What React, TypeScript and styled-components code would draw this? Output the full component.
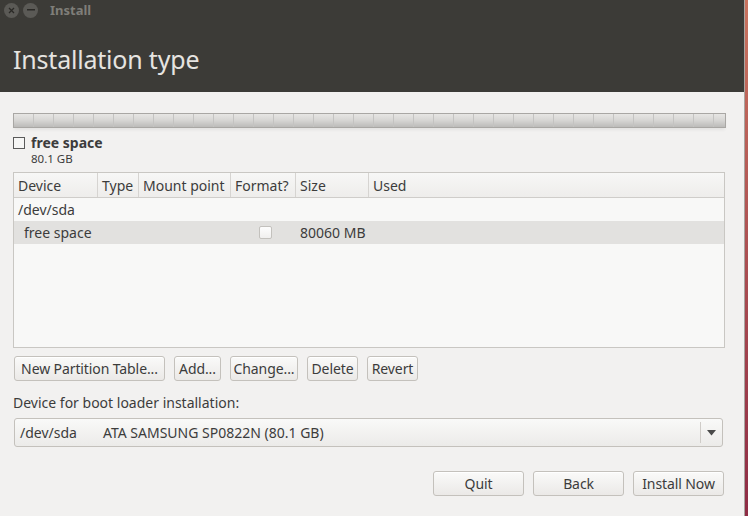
import React from "react";
import styled, { createGlobalStyle } from "styled-components";

const Global = createGlobalStyle`
  html, body { margin: 0; padding: 0; }
  body {
    width: 748px; height: 516px; overflow: hidden;
    font-family: "Noto Sans", "Open Sans", sans-serif;
    background: linear-gradient(#c9735f, #8e2c45);
  }
`;

const Frame = styled.div`
  display: flex;
  width: 748px;
  height: 516px;
`;

const Window = styled.div`
  width: 744px;
  height: 516px;
  display: flex;
  flex-direction: column;
  background: #f2f1f0;
  border-right: 1px solid #a9a6a2;
  color: #3c3c3c;
`;

const Header = styled.div`
  height: 92px;
  background: #3c3b37;
  display: flex;
  flex-direction: column;
  padding: 0 0 0 4px;
  box-sizing: border-box;
`;

const TitleBar = styled.div`
  height: 20px;
  display: flex;
  align-items: center;
  gap: 4px;
`;

const WinBtn = styled.span`
  width: 15px;
  height: 15px;
  border-radius: 50%;
  background: #5b5a56;
  display: flex;
  align-items: center;
  justify-content: center;
`;

const TitleText = styled.span`
  margin-left: 8px;
  font-weight: bold;
  font-size: 13px;
  color: #7f7e79;
`;

const PageTitle = styled.h1`
  margin: 22px 0 0 9px;
  font-weight: normal;
  font-size: 25px;
  line-height: 34px;
  color: #e6e4e0;
  letter-spacing: -0.2px;
`;

const Body = styled.div`
  flex: 1;
  padding: 21px 19px 0 13px;
  display: flex;
  flex-direction: column;
`;

const PartBar = styled.div`
  height: 13px;
  margin-right: -1px;
  border: 1px solid #a9a7a4;
  background:
    repeating-linear-gradient(90deg, transparent 0 19px, #c4c3c1 19px 20px),
    linear-gradient(#e7e6e4, #d6d5d3 50%, #bcbbb9);
  box-shadow: 0 3px 3px -1px rgba(0,0,0,0.06);
`;

const Legend = styled.div`
  margin-top: 6px;
  display: grid;
  grid-template-columns: 18px auto;
  grid-template-rows: 18px 14px;
  align-items: center;
`;

const LegendBox = styled.span`
  width: 10px;
  height: 10px;
  border: 1px solid #5a5a5a;
  background: #f6f6f5;
`;

const LegendName = styled.span`
  font-weight: bold;
  font-size: 14px;
  line-height: 18px;
  color: #3c3c3c;
`;

const LegendSize = styled.span`
  grid-column: 2;
  font-size: 11.5px;
  line-height: 14px;
  color: #3c3c3c;
`;

const Table = styled.div`
  margin-top: 6px;
  height: 174px;
  border: 1px solid #c9c7c3;
  background: #f8f8f7;
  display: flex;
  flex-direction: column;
`;

const cols = "84px 41px 92px 65px 73px 1fr";

const HeadRow = styled.div`
  display: grid;
  grid-template-columns: ${cols};
  height: 24px;
  background: linear-gradient(#f7f7f6, #eeedeb);
  border-bottom: 1px solid #cfcdca;
`;

const HeadCell = styled.div`
  font-size: 14px;
  padding-left: 4px;
  display: flex;
  align-items: center;
  border-right: 1px solid #d6d4d1;
  &:last-child { border-right: none; }
`;

const Row = styled.div<{ $sel?: boolean }>`
  display: grid;
  grid-template-columns: ${cols};
  height: 23px;
  align-items: center;
  font-size: 14px;
  background: ${(p) => (p.$sel ? "#e2e1df" : "transparent")};
`;

const Cell = styled.div<{ $indent?: number; $center?: boolean }>`
  padding-left: ${(p) => p.$indent ?? 4}px;
  white-space: nowrap;
  display: flex;
  justify-content: ${(p) => (p.$center ? "center" : "flex-start")};
`;

const SpanCell = styled(Cell)`
  grid-column: 1 / span 3;
`;

const CheckBox = styled.span`
  width: 11px;
  height: 11px;
  border: 1px solid #c3c1bd;
  border-radius: 2px;
  background: linear-gradient(#fdfdfd, #f0efee);
`;

const ButtonRow = styled.div`
  margin-top: 8px;
  display: flex;
  gap: 9px;
  padding-left: 1px;
`;

const Button = styled.button<{ $w: number }>`
  height: 25px;
  width: ${(p) => p.$w}px;
  padding: 0;
  font-family: inherit;
  font-size: 14px;
  color: #3c3c3c;
  background: linear-gradient(#fafaf9, #ebe9e7);
  border: 1px solid #c4c1bc;
  border-radius: 3px;
  box-shadow: inset 0 1px 0 #ffffff;
  display: flex;
  align-items: center;
  justify-content: center;
  white-space: nowrap;
  letter-spacing: -0.1px;
`;

const Label = styled.div`
  margin-top: 12px;
  font-size: 14px;
`;

const Combo = styled.div`
  margin-top: 6px;
  margin-left: 1px;
  margin-right: 2px;
  height: 27px;
  border: 1px solid #c4c1bc;
  border-radius: 3px;
  background: linear-gradient(#f9f9f8, #ecebe9);
  display: flex;
  align-items: center;
  font-size: 14px;
`;

const ComboDev = styled.span`
  padding-left: 5px;
  width: 83px;
`;

const ComboDesc = styled.span`
  flex: 1;
`;

const ComboArrow = styled.span`
  width: 21px;
  height: 21px;
  border-left: 1px solid #cfccc8;
  display: flex;
  align-items: center;
  justify-content: center;
`;

const Footer = styled.div`
  margin-top: 24px;
  display: flex;
  justify-content: flex-end;
  gap: 9px;
  padding-right: 1px;
`;

export default function App() {
  return (
    <Frame>
      <Global />
      <Window>
        <Header>
          <TitleBar>
            <WinBtn>
              <svg width="7" height="7" viewBox="0 0 7 7">
                <path d="M1 1L6 6M6 1L1 6" stroke="#2a2926" strokeWidth="1.3" />
              </svg>
            </WinBtn>
            <WinBtn>
              <svg width="8" height="2" viewBox="0 0 8 2">
                <rect x="0" y="0" width="8" height="1.5" fill="#2a2926" />
              </svg>
            </WinBtn>
            <TitleText>Install</TitleText>
          </TitleBar>
          <PageTitle>Installation type</PageTitle>
        </Header>
        <Body>
          <PartBar />
          <Legend>
            <LegendBox />
            <LegendName>free space</LegendName>
            <LegendSize>80.1 GB</LegendSize>
          </Legend>
          <Table>
            <HeadRow>
              <HeadCell>Device</HeadCell>
              <HeadCell>Type</HeadCell>
              <HeadCell>Mount point</HeadCell>
              <HeadCell>Format?</HeadCell>
              <HeadCell>Size</HeadCell>
              <HeadCell>Used</HeadCell>
            </HeadRow>
            <Row>
              <SpanCell>/dev/sda</SpanCell>
            </Row>
            <Row $sel>
              <SpanCell $indent={10}>free space</SpanCell>
              <Cell $center>
                <CheckBox />
              </Cell>
              <Cell>80060 MB</Cell>
              <Cell />
            </Row>
          </Table>
          <ButtonRow>
            <Button $w={151}>New Partition Table...</Button>
            <Button $w={47}>Add...</Button>
            <Button $w={68}>Change...</Button>
            <Button $w={51}>Delete</Button>
            <Button $w={51}>Revert</Button>
          </ButtonRow>
          <Label>Device for boot loader installation:</Label>
          <Combo>
            <ComboDev>/dev/sda</ComboDev>
            <ComboDesc>ATA SAMSUNG SP0822N (80.1 GB)</ComboDesc>
            <ComboArrow>
              <svg width="9" height="6" viewBox="0 0 9 6">
                <path d="M0 0H9L4.5 5.5Z" fill="#4a4a4a" />
              </svg>
            </ComboArrow>
          </Combo>
          <Footer>
            <Button $w={91}>Quit</Button>
            <Button $w={91}>Back</Button>
            <Button $w={91}>Install Now</Button>
          </Footer>
        </Body>
      </Window>
    </Frame>
  );
}
